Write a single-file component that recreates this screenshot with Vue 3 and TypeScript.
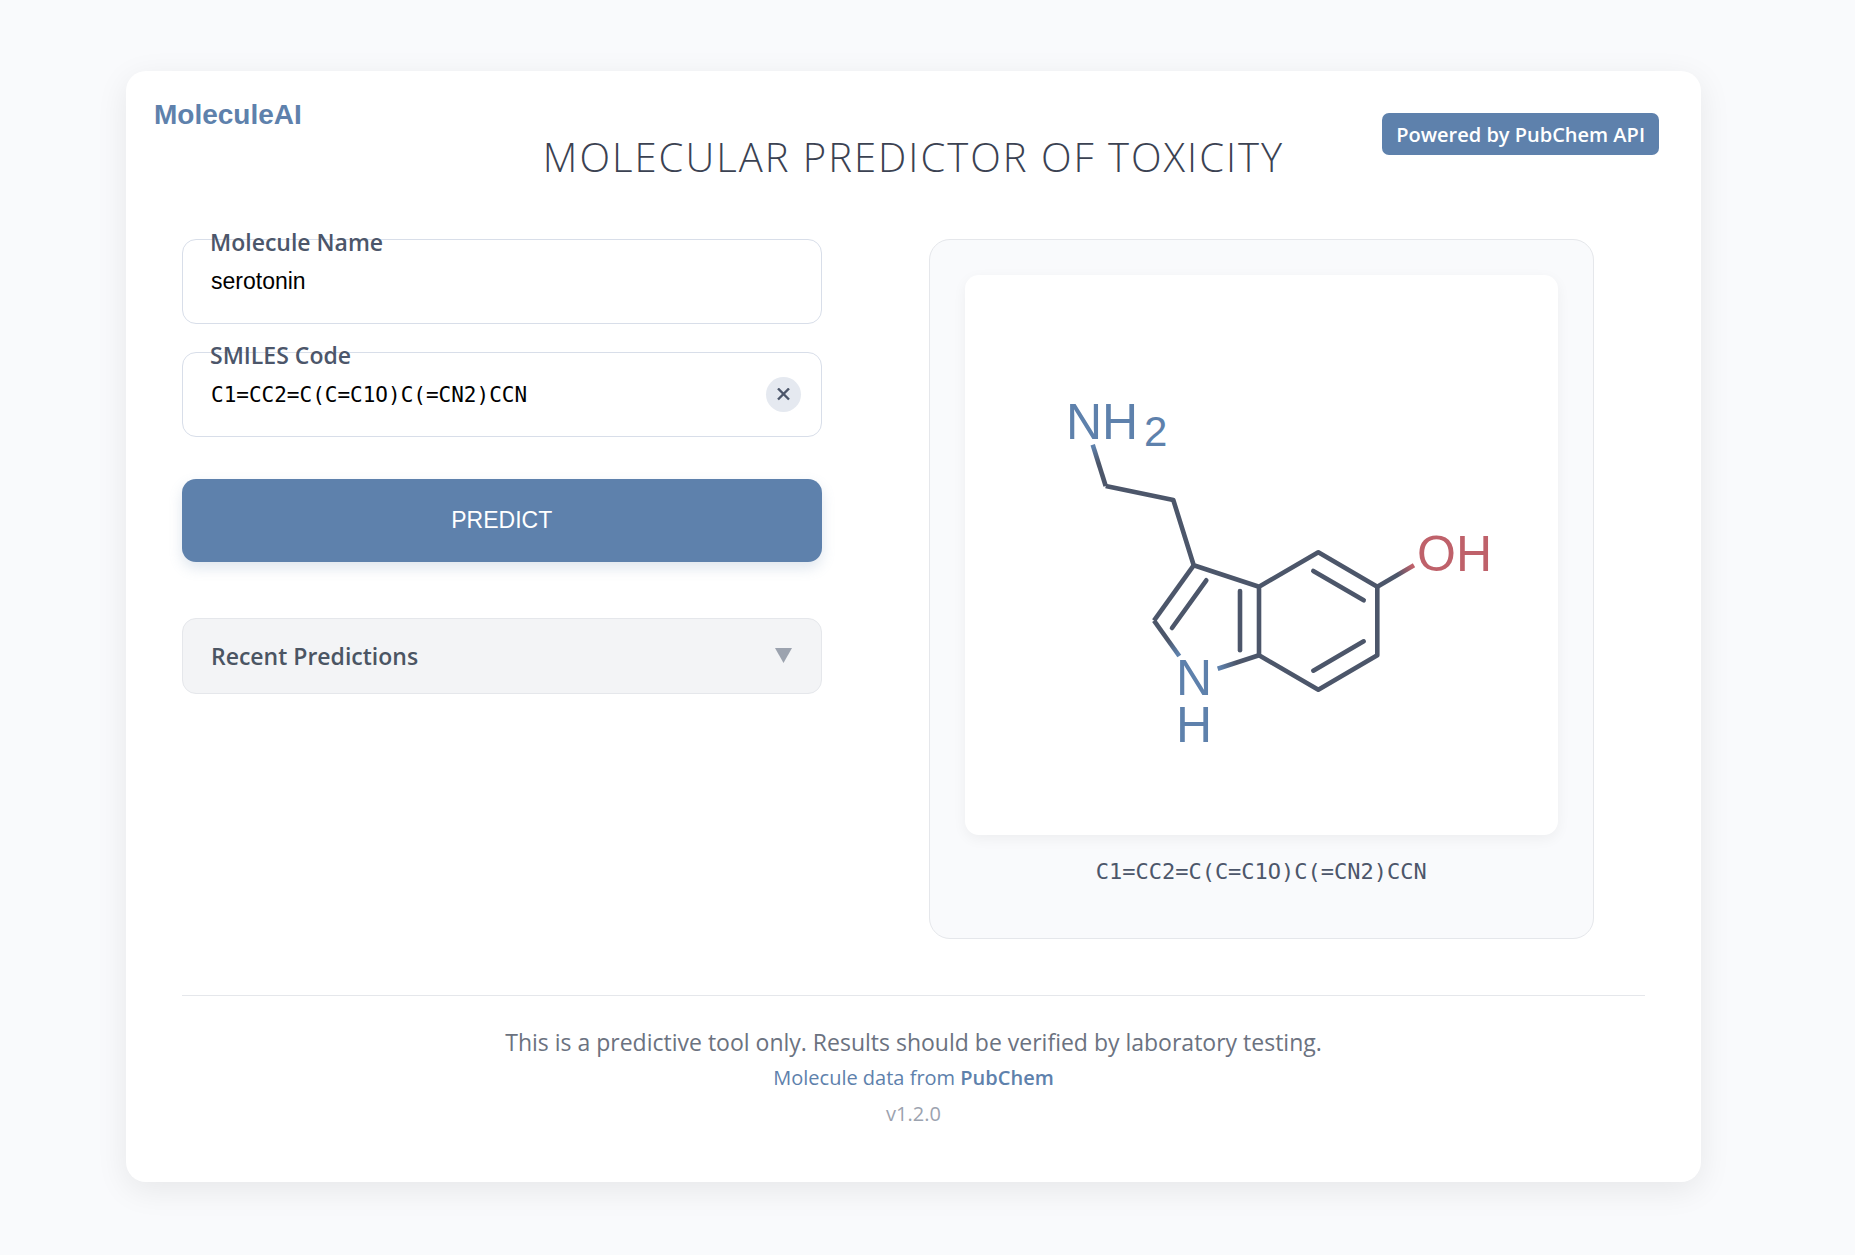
<script setup lang="ts">
import { ref } from 'vue'

interface Bond {
  from: [number, number]
  to: [number, number]
}

interface AtomBond extends Bond {
  id: string
  atom: string
}

const moleculeName = ref('serotonin')
const smiles = ref('C1=CC2=C(C=C1O)C(=CN2)CCN')
const historyOpen = ref(false)

const skeleton: string[] = [
  'M140.7 211 L208.3 225 L228.7 290.3 L294 311.7 L353.3 277.3 L412.3 311.7 L412.3 380.3 L353.3 414.7 L294 380.3 L294 311.7',
  'M228.7 290.3 L189 345.7',
]

const innerBonds: Bond[] = [
  { from: [241.3, 305.3], to: [207, 353] },
  { from: [275, 316], to: [275, 375.3] },
  { from: [348.3, 296], to: [398.7, 325.3] },
  { from: [398.7, 366.3], to: [348.3, 395.7] },
]

// Bonds that fade into the colour of the hetero atom they end on
const atomBonds: AtomBond[] = [
  { id: 'bond-amine', atom: '#5e81ac', from: [127.7, 169.7], to: [140.7, 211] },
  { id: 'bond-hydroxyl', atom: '#bf616a', from: [449, 290.3], to: [412.3, 311.7] },
  { id: 'bond-pyrrole-left', atom: '#5e81ac', from: [214.3, 381], to: [189, 345.7] },
  { id: 'bond-pyrrole-right', atom: '#5e81ac', from: [252.7, 393.7], to: [294, 380.3] },
]
</script>

<template>
  <main class="card">
    <header class="header">
      <div class="logo">MoleculeAI</div>
      <h1 class="title">MOLECULAR PREDICTOR OF TOXICITY</h1>
      <div class="badge">Powered by PubChem API</div>
    </header>

    <div class="content">
      <form class="form" @submit.prevent>
        <div class="field">
          <label for="molecule-name">Molecule Name</label>
          <input id="molecule-name" v-model="moleculeName" type="text" autocomplete="off" />
        </div>
        <div class="field">
          <label for="smiles-code">SMILES Code</label>
          <input id="smiles-code" v-model="smiles" class="mono" type="text" spellcheck="false" autocomplete="off" />
          <button class="clear" type="button" aria-label="Clear SMILES code" @click="smiles = ''">
            <svg width="13" height="13" viewBox="0 0 13 13" aria-hidden="true">
              <path d="M1 0.5 L12 11.5 M12 0.5 L1 11.5" />
            </svg>
          </button>
        </div>
        <button class="predict" type="submit">PREDICT</button>
        <button class="recent" type="button" :aria-expanded="historyOpen" @click="historyOpen = !historyOpen">
          <span>Recent Predictions</span>
          <svg width="18" height="16" viewBox="0 0 18 16" aria-hidden="true">
            <path d="M0 0 H17 L8.5 15 Z" />
          </svg>
        </button>
      </form>

      <section class="preview">
        <svg class="molecule" viewBox="0 0 593 560" role="img" aria-label="Molecule structure">
          <defs>
            <linearGradient
              v-for="b in atomBonds"
              :id="b.id"
              :key="b.id"
              gradientUnits="userSpaceOnUse"
              :x1="b.from[0]"
              :y1="b.from[1]"
              :x2="b.to[0]"
              :y2="b.to[1]"
            >
              <stop offset="0.05" :stop-color="b.atom" />
              <stop offset="0.45" stop-color="#4c566a" />
            </linearGradient>
          </defs>
          <g class="bonds">
            <path v-for="d in skeleton" :key="d" :d="d" />
            <line
              v-for="(b, i) in innerBonds"
              :key="i"
              class="inner"
              :x1="b.from[0]"
              :y1="b.from[1]"
              :x2="b.to[0]"
              :y2="b.to[1]"
            />
            <line
              v-for="b in atomBonds"
              :key="b.id"
              :x1="b.from[0]"
              :y1="b.from[1]"
              :x2="b.to[0]"
              :y2="b.to[1]"
              :style="{ stroke: `url(#${b.id})` }"
            />
          </g>
          <g class="nitrogen">
            <text x="101" y="164">NH</text>
            <text class="sub" x="179" y="171">2</text>
            <text x="211" y="420">N</text>
            <text x="211" y="467">H</text>
          </g>
          <text class="oxygen" x="452" y="296">OH</text>
        </svg>
        <p class="caption">{{ smiles }}</p>
      </section>
    </div>

    <footer class="footer">
      <p class="note">This is a predictive tool only. Results should be verified by laboratory testing.</p>
      <p class="source">Molecule data from <a href="#pubchem">PubChem</a></p>
      <p class="version">v1.2.0</p>
    </footer>
  </main>
</template>

<style>
body {
  background: #f9fafc;
}
</style>

<style scoped>
.card {
  box-sizing: border-box;
  margin: 71px 154px 73px 126px;
  padding-bottom: 50px;
  border-radius: 20px;
  background: #fff;
  box-shadow: 0 8px 32px rgba(0, 0, 0, 0.08);
  font-family: 'Open Sans', 'Noto Sans', sans-serif;
  color: #4c566a;
}

.header {
  display: grid;
  grid-template-columns: 1fr auto 1fr;
  align-items: start;
  padding: 28px 28px 0;
}

.logo {
  font: bold 28px/32px 'Liberation Sans', Arial, sans-serif;
  color: #5e81ac;
}

.title {
  margin: 28px 0 0;
  font-size: 40px;
  font-weight: 300;
  line-height: 60px;
  letter-spacing: 2px;
  color: #3b4252;
}

.badge {
  justify-self: end;
  box-sizing: border-box;
  height: 42px;
  margin: 14px 14px 0 0;
  padding: 0 14px;
  border-radius: 7px;
  background: #5e81ac;
  color: #fff;
  font-size: 20px;
  font-weight: 600;
  line-height: 44px;
}

.content {
  display: grid;
  grid-template-columns: 5fr 6fr;
  gap: 56px;
  padding: 52px 56px 0;
}

.form {
  display: flex;
  flex-direction: column;
}

.field {
  position: relative;
  margin-bottom: 28px;
}

.field label {
  position: absolute;
  top: -14px;
  left: 28px;
  font-size: 23px;
  font-weight: 600;
  line-height: 34px;
}

.field input {
  display: block;
  box-sizing: border-box;
  width: 100%;
  height: 85px;
  padding: 0 28px;
  border: 1px solid #d8dee9;
  border-radius: 14px;
  background: #fff;
  color: #000;
  font: 23px 'Liberation Sans', Arial, sans-serif;
}

.field input.mono {
  padding-right: 70px;
  font: 21px 'DejaVu Sans Mono', monospace;
}

.clear {
  position: absolute;
  top: 25px;
  right: 21px;
  display: flex;
  align-items: center;
  justify-content: center;
  width: 35px;
  height: 35px;
  padding: 0;
  border: 0;
  border-radius: 50%;
  background: #e5e9f0;
}

.clear path {
  fill: none;
  stroke: #4c566a;
  stroke-width: 2.4;
}

.predict {
  height: 83px;
  margin-top: 14px;
  border: 0;
  border-radius: 14px;
  background: #5e81ac;
  box-shadow: 0 6px 14px rgba(94, 129, 172, 0.2);
  color: #fff;
  font: 23px 'Liberation Sans', Arial, sans-serif;
}

.recent {
  display: flex;
  align-items: center;
  justify-content: space-between;
  height: 76px;
  margin-top: 56px;
  padding: 0 28px;
  border: 1px solid #e5e7eb;
  border-radius: 14px;
  background: #f3f4f6;
  color: #4b5563;
  font: 600 23px 'Open Sans', 'Noto Sans', sans-serif;
}

.recent path {
  fill: #9ca3af;
}

.preview {
  box-sizing: border-box;
  justify-self: center;
  width: 100%;
  max-width: 665px;
  padding: 35px;
  border: 1px solid #e5e7eb;
  border-radius: 21px;
  background: #f9fafc;
}

.molecule {
  display: block;
  width: 100%;
  border-radius: 14px;
  background: #fff;
  box-shadow: 0 4px 14px rgba(0, 0, 0, 0.05);
}

.bonds {
  fill: none;
  stroke: #4c566a;
  stroke-width: 4.6;
  stroke-linejoin: round;
}

.inner {
  stroke-linecap: round;
}

.molecule text {
  font: 50px 'Liberation Sans', Arial, sans-serif;
}

.molecule .sub {
  font-size: 42px;
}

.nitrogen {
  fill: #5e81ac;
}

.oxygen {
  fill: #bf616a;
}

.caption {
  margin: 21px 0 15px;
  text-align: center;
  font: 22px/32px 'DejaVu Sans Mono', monospace;
}

.footer {
  margin: 56px 56px 0;
  padding-top: 28px;
  border-top: 1px solid #e5e7eb;
  text-align: center;
  line-height: 36px;
}

.footer p {
  margin: 0;
}

.note {
  font-size: 23px;
  color: #6b7280;
}

.source {
  font-size: 20px;
  color: #5e81ac;
}

.source a {
  color: inherit;
  font-weight: 600;
  text-decoration: none;
}

.version {
  font-size: 20px;
  color: #9ca3af;
}
</style>
